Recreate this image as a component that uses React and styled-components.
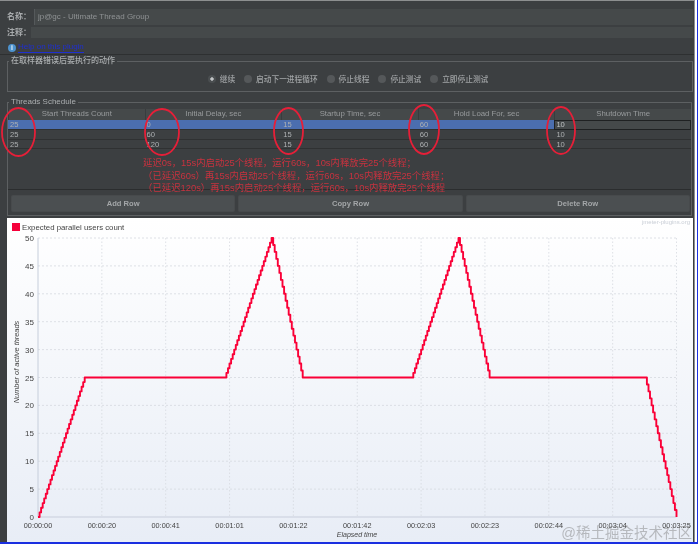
import React from "react";
import styled, { createGlobalStyle } from "styled-components";

const GlobalStyle = createGlobalStyle`
  html, body {
    margin: 0;
    padding: 0;
    background: #fff;
  }
  * { box-sizing: border-box; }
`;

const sans = `"Liberation Sans", "Noto Sans CJK SC", sans-serif`;

const COLUMNS = ["Start Threads Count", "Initial Delay, sec", "Startup Time, sec", "Hold Load For, sec", "Shutdown Time"];
const ROWS = [
  ["25", "0", "15", "60", "10"],
  ["25", "60", "15", "60", "10"],
  ["25", "120", "15", "60", "10"],
];
const ACTIONS = ["继续", "启动下一进程循环", "停止线程", "停止测试", "立即停止测试"];
const NOTES = [
  "延迟0s，15s内启动25个线程，运行60s，10s内释放完25个线程；",
  "（已延迟60s）再15s内启动25个线程，运行60s，10s内释放完25个线程；",
  "（已延迟120s）再15s内启动25个线程，运行60s，10s内释放完25个线程",
];
const RINGS = [
  [18.5, 132, 16.5, 24],
  [162, 132, 17, 23],
  [288.5, 131, 14.5, 23],
  [424, 129.5, 15, 24.5],
  [561, 130.5, 14, 23.5],
];
const X_TICKS = ["00:00:00", "00:00:20", "00:00:41", "00:01:01", "00:01:22", "00:01:42", "00:02:03", "00:02:23", "00:02:44", "00:03:04", "00:03:25"];

const X0 = 38;
const X1 = 676.5;
const Y0 = 517;
const Y50 = 238;
const xAt = (sec) => X0 + (sec / 205) * (X1 - X0);
const yAt = (users) => Y0 - (users / 50) * (Y0 - Y50);

const usersAt = (sec) => {
  let total = 0;
  [0, 60, 120].forEach((delay) => {
    const s = sec - delay;
    if (s <= 0) return;
    if (s < 15) total += (25 * s) / 15;
    else if (s < 75) total += 25;
    else if (s < 85) total += 25 - (25 * (s - 75)) / 10;
  });
  return total;
};

// half second samples keep the small jaggies of the ramps
const stairPath = () => {
  let d = `M${xAt(0)} ${yAt(0)}`;
  for (let s = 0.5; s <= 205; s += 0.5) {
    d += `H${xAt(s).toFixed(1)}V${yAt(usersAt(s)).toFixed(1)}`;
  }
  return d;
};

const App = () => (
  <>
    <GlobalStyle />
    <Page>
      <Frame>
        <Panel>
          <NameRow>
            <FieldLabel>名称：</FieldLabel>
            <NameInput>jp@gc - Ultimate Thread Group</NameInput>
          </NameRow>
          <CommentRow>
            <FieldLabel>注释：</FieldLabel>
            <CommentInput />
          </CommentRow>
          <HelpRow>
            <InfoIcon>i</InfoIcon>
            <HelpLink>Help on this plugin</HelpLink>
          </HelpRow>
          <ActionBox>
            <BoxTitle>在取样器错误后要执行的动作</BoxTitle>
            <RadioRow>
              {ACTIONS.map((label, i) => (
                <RadioItem key={label}>
                  <Radio $checked={i === 0} />
                  {label}
                </RadioItem>
              ))}
            </RadioRow>
          </ActionBox>
          <ScheduleBox>
            <BoxTitle>Threads Schedule</BoxTitle>
            <Table>
              <HeaderRow>
                {COLUMNS.map((c) => (
                  <HeaderCell key={c}>{c}</HeaderCell>
                ))}
              </HeaderRow>
              {ROWS.map((row, r) => (
                <DataRow key={r} $selected={r === 0}>
                  {row.map((v, c) => (
                    <Cell key={c} $editing={r === 0 && c === 4}>
                      {v}
                    </Cell>
                  ))}
                </DataRow>
              ))}
            </Table>
            <ButtonRow>
              <Button>Add Row</Button>
              <Button>Copy Row</Button>
              <Button>Delete Row</Button>
            </ButtonRow>
          </ScheduleBox>
          <Chart>
            <svg width="686" height="324" viewBox="7 218 686 324">
              <text x="690" y="224" textAnchor="end" fontSize="6" fill="#c9ced6" fontFamily="Liberation Sans">
                jmeter-plugins.org
              </text>
              <rect x="12" y="223" width="8" height="8" fill="#f5003a" />
              <text x="22" y="230" fontSize="7.8" fill="#444" fontFamily="Liberation Sans">
                Expected parallel users count
              </text>
              {[5, 10, 15, 20, 25, 30, 35, 40, 45, 50].map((u) => (
                <line key={u} x1={X0} x2={X1} y1={yAt(u)} y2={yAt(u)} stroke="#d6d9df" strokeWidth="0.8" strokeDasharray="2 2" />
              ))}
              {X_TICKS.slice(1).map((t, i) => (
                <line key={t} x1={X0 + (i + 1) * 63.85} x2={X0 + (i + 1) * 63.85} y1={Y50} y2={Y0} stroke="#d6d9df" strokeWidth="0.8" strokeDasharray="1.5 2" />
              ))}
              <line x1={X0} x2={X0} y1={Y50} y2={Y0} stroke="#c6cedb" strokeWidth="1" />
              <line x1={X0} x2={X1} y1={Y0} y2={Y0} stroke="#d3d9e4" strokeWidth="1.5" />
              {[0, 5, 10, 15, 20, 25, 30, 35, 40, 45, 50].map((u) => (
                <text key={u} x="34" y={yAt(u) + 3} textAnchor="end" fontSize="8" fill="#444" fontFamily="Liberation Sans">
                  {u}
                </text>
              ))}
              {X_TICKS.map((t, i) => (
                <text key={t} x={X0 + i * 63.85} y="528" textAnchor="middle" fontSize="7.3" fill="#444" fontFamily="Liberation Sans">
                  {t}
                </text>
              ))}
              <text x="357" y="537" textAnchor="middle" fontSize="7" fontStyle="italic" fill="#444" fontFamily="Liberation Sans">
                Elapsed time
              </text>
              <text transform="translate(19 362) rotate(-90)" textAnchor="middle" fontSize="7.4" fontStyle="italic" fill="#444" fontFamily="Liberation Sans">
                Number of active threads
              </text>
              <path d={stairPath()} fill="none" stroke="#fa0037" strokeWidth="1.9" strokeLinejoin="round" />
            </svg>
          </Chart>
        </Panel>
      </Frame>
      <Notes>
        {NOTES.map((n) => (
          <div key={n}>{n}</div>
        ))}
      </Notes>
      <Rings width="698" height="200" viewBox="0 0 698 200">
        {RINGS.map(([cx, cy, rx, ry]) => (
          <ellipse key={cx} cx={cx} cy={cy} rx={rx} ry={ry} fill="none" stroke="#e61f38" strokeWidth="1.8" />
        ))}
      </Rings>
      <Watermark>@稀土掘金技术社区</Watermark>
    </Page>
  </>
);

const Page = styled.div`
  position: relative;
  width: 698px;
  height: 544px;
  overflow: hidden;
  background: #fff;
  font-family: ${sans};
  filter: blur(0.35px);
`;

const Frame = styled.div`
  width: 698px;
  height: 544px;
  padding-right: 2px;
  border-right: 1px solid #1a2fe0;
  border-bottom: 2px solid #1a2fe0;
`;

const Panel = styled.div`
  height: 542px;
  padding-top: 1px;
  border-right: 1px solid #8d8f90;
  display: flex;
  flex-direction: column;
  background: linear-gradient(#8d8f90, #8d8f90) top / 100% 1px no-repeat, #3c3f41;
`;

const NameRow = styled.div`
  height: 24px;
  padding: 8px 1px 0 7px;
  display: flex;
  align-items: stretch;
`;

const CommentRow = styled.div`
  height: 13px;
  padding: 2px 1px 0 7px;
  display: flex;
  align-items: stretch;
`;

const FieldLabel = styled.span`
  align-self: center;
  font-size: 8px;
  font-weight: 700;
  color: #a8abad;
  line-height: 12px;
  white-space: nowrap;
`;

const NameInput = styled.div`
  flex: 1;
  margin-left: 3px;
  padding-left: 3px;
  background: #45494a;
  border-left: 1px solid #55595b;
  font-size: 8px;
  line-height: 15px;
  color: #8f9294;
`;

const CommentInput = styled.div`
  flex: 1;
  background: #45494a;
`;

const HelpRow = styled.div`
  height: 17px;
  padding: 1px 0 0 8px;
  display: flex;
  align-items: center;
  gap: 2px;
  border-bottom: 1px solid #2e3031;
`;

const InfoIcon = styled.span`
  width: 8px;
  height: 8px;
  margin-top: 2px;
  border-radius: 50%;
  background: #4d93cf;
  color: #e8f2fa;
  font-size: 7px;
  font-weight: 700;
  line-height: 8px;
  text-align: center;
`;

const HelpLink = styled.span`
  font-size: 8px;
  line-height: 11px;
  color: #1f2fd0;
  border-bottom: 1px solid #1f2fd0;
`;

const Box = styled.fieldset`
  margin: 0 0 0 7px;
  padding: 0;
  min-width: 0;
  border: 1px solid #5d6062;
  flex-shrink: 0;
`;

const BoxTitle = styled.legend`
  margin-left: 1px;
  padding: 0 2px;
  font-size: 8px;
  font-weight: 500;
  line-height: 8px;
  color: #abaeb0;
`;

const ActionBox = styled(Box)`
  height: 35px;
  margin-top: 2px;
  width: 686px;
`;

const ScheduleBox = styled(Box)`
  height: 118px;
  margin-top: 6px;
  width: 685px;
  display: flex;
  flex-direction: column;
`;

const RadioRow = styled.div`
  height: 27px;
  padding-right: 4px;
  display: flex;
  justify-content: center;
  align-items: center;
  gap: 9px;
`;

const RadioItem = styled.label`
  display: flex;
  align-items: center;
  gap: 4px;
  font-size: 7.7px;
  font-weight: 500;
  color: #a0a3a5;
  white-space: nowrap;
`;

const Radio = styled.span`
  width: 8px;
  height: 8px;
  border-radius: 50%;
  background: ${(p) => (p.$checked ? "radial-gradient(circle, #c2c5c7 0 1.4px, #4a4e50 2px)" : "#55585a")};
`;

const Table = styled.div`
  height: 81px;
  margin: 3px 0 0 0;
  border-bottom: 1px solid #2b2d2e;
`;

const HeaderRow = styled.div`
  height: 11px;
  display: grid;
  grid-template-columns: repeat(5, 1fr);
  background: #45494a;
`;

const HeaderCell = styled.div`
  font-size: 7.8px;
  line-height: 10px;
  text-align: center;
  color: #989b9d;
  border-left: 1px solid #393c3e;
`;

const DataRow = styled.div`
  height: ${(p) => (p.$selected ? "10px" : "9.5px")};
  display: grid;
  grid-template-columns: repeat(5, 1fr);
  background: ${(p) => (p.$selected ? "#4b6eaf" : "transparent")};
  border-bottom: 1px solid #2f3132;
`;

const Cell = styled.div`
  padding-left: 2px;
  font-size: 7.6px;
  line-height: 9px;
  color: ${(p) => (p.$editing ? "#c2c5c7" : "#aeb1b3")};
  ${(p) => p.$editing && "background: #45494a; border: 1px solid #1f2122; line-height: 8px; padding-left: 1px;"}
`;

const ButtonRow = styled.div`
  margin-top: 5px;
  padding: 0 1px 0 3px;
  display: grid;
  grid-template-columns: repeat(3, 1fr);
  gap: 3px;
`;

const Button = styled.div`
  height: 17px;
  border-radius: 2px;
  background: #4b4f51;
  border: 1px solid #43464880;
  font-size: 7.6px;
  font-weight: 700;
  line-height: 15px;
  text-align: center;
  color: #a3a6a8;
`;

const Chart = styled.div`
  width: 686px;
  height: 324px;
  margin: 2px 0 0 7px;
  flex-shrink: 0;
  background: linear-gradient(#ffffff, #e8edf6);
  svg {
    display: block;
  }
`;

const Notes = styled.div`
  position: absolute;
  left: 143px;
  top: 157px;
  font-size: 9.4px;
  line-height: 12.5px;
  color: #c8323f;
  white-space: nowrap;
`;

const Rings = styled.svg`
  position: absolute;
  left: 0;
  top: 0;
  pointer-events: none;
`;

const Watermark = styled.div`
  position: absolute;
  right: 6px;
  bottom: 3px;
  font-size: 14.5px;
  line-height: 16px;
  color: rgba(120, 120, 120, 0.45);
  white-space: nowrap;
`;

export default App;
